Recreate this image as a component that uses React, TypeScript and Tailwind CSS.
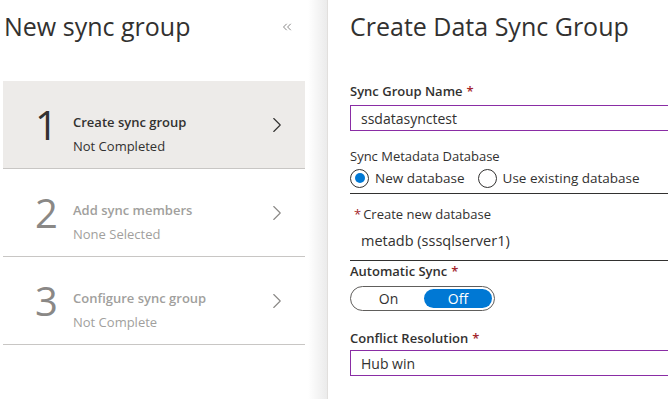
import { ChevronRight, ChevronsLeft } from "lucide-react";

const font = { fontFamily: '"Open Sans", "Noto Sans", sans-serif' };

type Step = { n: string; title: string; sub: string; active?: boolean };

const steps: Step[] = [
    { n: "1", title: "Create sync group", sub: "Not Completed", active: true },
    { n: "2", title: "Add sync members", sub: "None Selected" },
    { n: "3", title: "Configure sync group", sub: "Not Complete" },
];

const Req = () => <span className="text-[#a4262c] ml-1">*</span>;

const StepRow = ({ step }: { step: Step }) => (
    <div
        className={`h-[88px] flex items-center border-b border-[#c8c6c4] ${
            step.active ? "bg-[#edebe9]" : "bg-white"
        }`}
    >
        <div
            className={`w-[70px] pl-[32px] text-[40px] leading-none ${
                step.active ? "text-[#323130]" : "text-[#8a8886]"
            }`}
        >
            {step.n}
        </div>
        <div className="flex-1 flex flex-col gap-[8px] mt-[18px]">
            <div
                className={`text-[13px] leading-4 font-semibold ${
                    step.active ? "text-[#323130]" : "text-[#a19f9d]"
                }`}
            >
                {step.title}
            </div>
            <div
                className={`text-[13px] leading-4 ${
                    step.active ? "text-[#323130]" : "text-[#a19f9d]"
                }`}
            >
                {step.sub}
            </div>
        </div>
        <ChevronRight
            size={26}
            strokeWidth={1}
            className={`mr-[15px] ${step.active ? "text-[#323130]" : "text-[#8a8886]"}`}
        />
    </div>
);

const Radio = ({ checked, label }: { checked?: boolean; label: string }) => (
    <div className="flex items-center gap-[6px]">
        <div className="w-[19px] h-[19px] rounded-full border border-[#323130] flex items-center justify-center bg-white">
            {checked && <div className="w-[10px] h-[10px] rounded-full bg-[#0078d4]" />}
        </div>
        <span className="text-[13.5px] text-[#323130]">{label}</span>
    </div>
);

export default function App() {
    return (
        <div className="w-[668px] h-[399px] bg-white flex overflow-hidden" style={font}>
            <div className="w-[308px] shrink-0 flex flex-col">
                <div className="h-[53px] flex items-center justify-between pl-[4px] pr-[14px]">
                    <div className="text-[25px] text-[#323130]">New sync group</div>
                    <ChevronsLeft size={14} strokeWidth={1} className="text-[#323130]" />
                </div>
                <div className="mt-[28px] ml-[3px] w-[302px] flex flex-col">
                    {steps.map((s) => (
                        <StepRow key={s.n} step={s} />
                    ))}
                </div>
            </div>
            <div className="w-[19px] shrink-0 h-full bg-gradient-to-r from-white to-[#ebebeb]" />
            <div className="w-[1px] shrink-0 h-full bg-[#e1dfdd]" />
            <div className="flex-1 min-w-0 pl-[22px] flex flex-col text-[#323130]">
                <div className="h-[53px] flex items-center text-[25px] whitespace-nowrap">
                    Create Data Sync Group
                </div>
                <div className="mt-[29px] text-[13px] font-semibold leading-[18px]">
                    Sync Group Name
                    <Req />
                </div>
                <div className="mt-[5px] w-[340px] shrink-0 h-[26px] border border-[#8a2da5] flex items-center pl-[10px] text-[14px]">
                    ssdatasynctest
                </div>
                <div className="mt-[16px] text-[13px] leading-[18px]">Sync Metadata Database</div>
                <div className="mt-[2px] flex items-center gap-[13px] h-[22px]">
                    <Radio checked label="New database" />
                    <Radio label="Use existing database" />
                </div>
                <div className="mt-[4px] h-[1px] w-[340px] shrink-0 bg-[#323130]" />
                <div className="mt-[11px] pl-[4px] text-[13px] leading-[18px] font-medium">
                    <span className="text-[#a4262c] mr-[2px]">*</span>Create new database
                </div>
                <div className="mt-[8px] pl-[11px] text-[14.5px] leading-[20px]">metadb (sssqlserver1)</div>
                <div className="mt-[9px] h-[1px] w-[340px] shrink-0 bg-[#323130]" />
                <div className="mt-[1px] text-[13px] font-semibold leading-[18px]">
                    Automatic Sync
                    <Req />
                </div>
                <div className="mt-[6px] w-[145px] h-[25px] rounded-full border border-[#605e5c] flex items-center p-[2px]">
                    <div className="flex-1 text-center text-[14px]">On</div>
                    <div className="w-[68px] h-[19px] rounded-full bg-[#0078d4] text-white text-[14px] flex items-center justify-center">
                        Off
                    </div>
                </div>
                <div className="mt-[18px] text-[13px] font-semibold leading-[18px]">
                    Conflict Resolution
                    <Req />
                </div>
                <div className="mt-[3px] w-[340px] shrink-0 h-[26px] border border-[#8a2da5] flex items-center pl-[10px] text-[14px]">
                    Hub win
                </div>
            </div>
        </div>
    );
}
